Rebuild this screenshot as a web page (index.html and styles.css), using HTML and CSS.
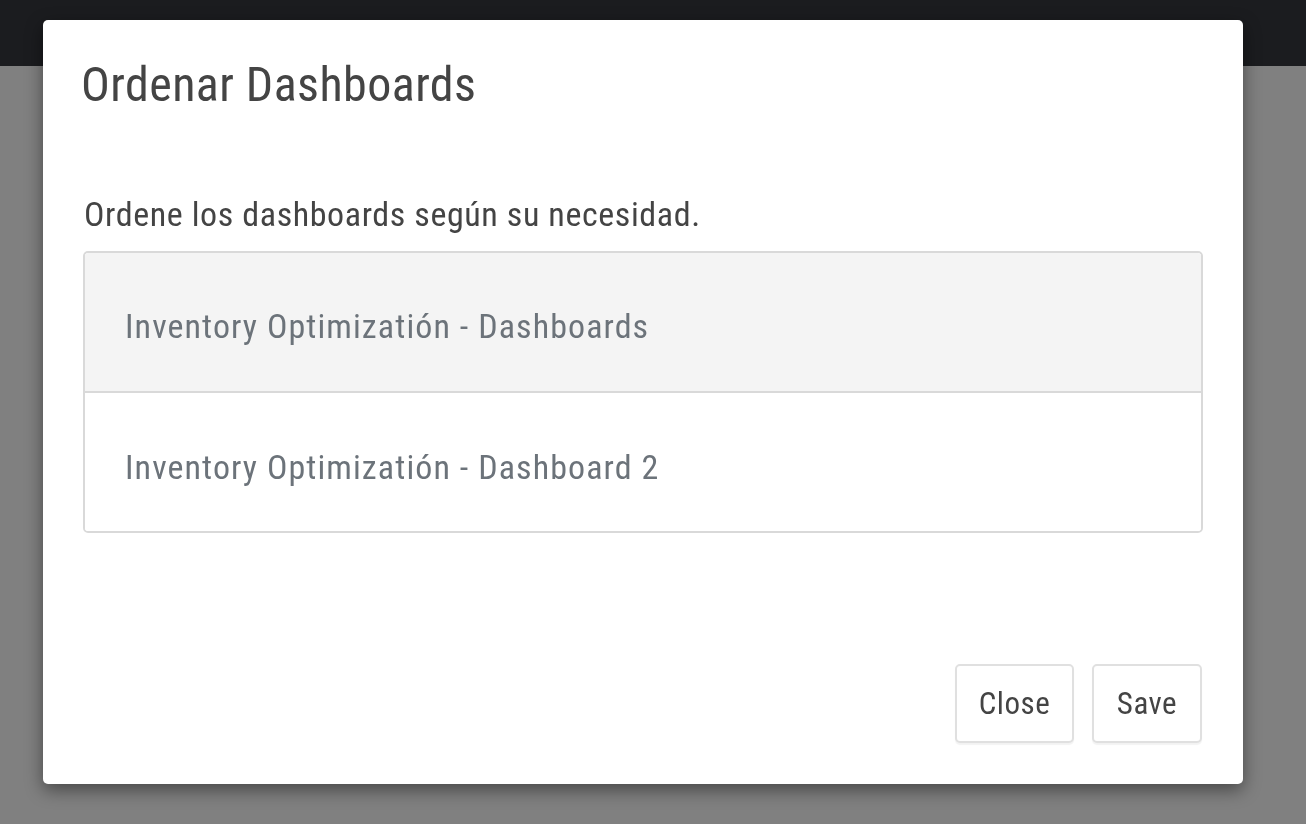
FILE: index.html
```html
<!DOCTYPE html>
<html lang="es">
<head>
<meta charset="utf-8">
<title>Ordenar Dashboards</title>
<link rel="stylesheet" href="styles.css">
</head>
<body>
<div class="page">
  <header class="navbar"></header>
  <main class="content"></main>
</div>
<div class="backdrop">
  <div class="modal" role="dialog">
    <div class="modal-header">
      <h2 class="modal-title">Ordenar Dashboards</h2>
    </div>
    <div class="modal-body">
      <p class="lead">Ordene los dashboards según su necesidad.</p>
      <ul class="list">
        <li class="list-item active">Inventory Optimizatión - Dashboards</li>
        <li class="list-item">Inventory Optimizatión - Dashboard 2</li>
      </ul>
    </div>
    <div class="modal-footer">
      <button class="btn btn-close">Close</button>
      <button class="btn btn-save">Save</button>
    </div>
  </div>
</div>
</body>
</html>
```
FILE: styles.css
```css
html, body {
  margin: 0;
  padding: 0;
  height: 100%;
}
body {
  font-family: "Roboto Condensed", Roboto, "Liberation Sans", sans-serif;
  background: #808080;
  overflow: hidden;
}
.page {
  display: flex;
  flex-direction: column;
  height: 824px;
}
.navbar {
  height: 66px;
  background: #1b1c1f;
  flex: none;
}
.content {
  flex: 1;
  background: #808080;
}
.backdrop {
  position: fixed;
  inset: 0;
}
.modal {
  position: absolute;
  left: 43px;
  top: 20px;
  width: 1200px;
  height: 764px;
  box-sizing: border-box;
  background: #fff;
  border-radius: 5px;
  box-shadow: 0 6px 18px rgba(0, 0, 0, 0.45);
  display: flex;
  flex-direction: column;
}
.modal-header {
  padding: 36px 41px 0 38px;
}
.modal-title {
  margin: 0;
  font-size: 48px;
  line-height: 1.2;
  font-weight: 400;
  color: #444;
  letter-spacing: 0.45px;
}
.modal-body {
  padding: 80px 40px 0 40px;
}
.lead {
  margin: 0 0 17px 1px;
  font-size: 34px;
  line-height: 1.2;
  color: #444;
  letter-spacing: 0.6px;
}
.list {
  list-style: none;
  margin: 0;
  padding: 0;
  border: 2px solid #d9d9d9;
  border-radius: 5px;
  overflow: hidden;
}
.list-item {
  height: 138px;
  box-sizing: border-box;
  display: flex;
  align-items: center;
  padding: 8px 38px 0 40px;
  font-size: 34px;
  color: #6c737a;
  letter-spacing: 1.08px;
  background: #fff;
}
.list-item + .list-item {
  height: 140px;
  border-top: 2px solid #d9d9d9;
  padding-top: 10px;
}
.list-item.active {
  background: #f4f4f4;
}
.modal-footer {
  margin-top: auto;
  padding: 0 41px 41px;
  display: flex;
  justify-content: flex-end;
  gap: 18px;
}
.btn {
  height: 79px;
  box-sizing: border-box;
  border: 2px solid #e0e0e0;
  border-radius: 5px;
  background: #fff;
  box-shadow: 0 2px 1px rgba(0, 0, 0, 0.05);
  font-family: inherit;
  font-size: 31px;
  color: #444;
  letter-spacing: 0.5px;
  padding: 0;
}
.btn-close { width: 119px; }
.btn-save { width: 110px; }
```
